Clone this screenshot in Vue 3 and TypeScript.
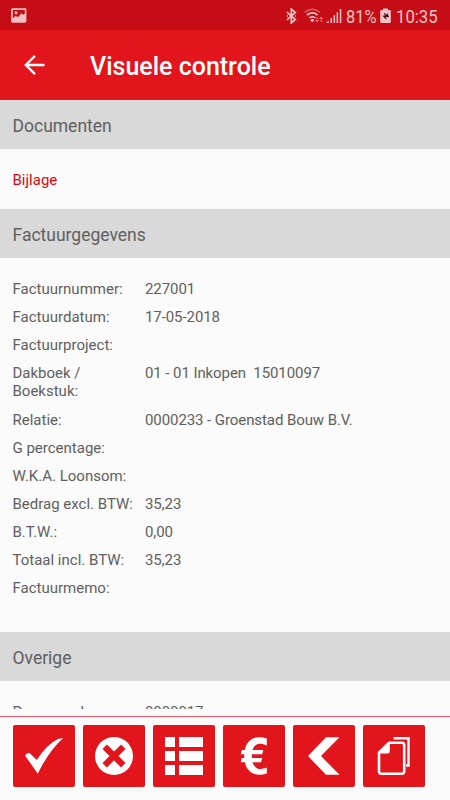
<script setup lang="ts">
interface Field {
  label: string
  value: string
}

const fields: Field[] = [
  { label: 'Factuurnummer:', value: '227001' },
  { label: 'Factuurdatum:', value: '17-05-2018' },
  { label: 'Factuurproject:', value: '' },
  { label: 'Dakboek / Boekstuk:', value: '01 - 01 Inkopen  15010097' },
  { label: 'Relatie:', value: '0000233 - Groenstad Bouw B.V.' },
  { label: 'G percentage:', value: '' },
  { label: 'W.K.A. Loonsom:', value: '' },
  { label: 'Bedrag excl. BTW:', value: '35,23' },
  { label: 'B.T.W.:', value: '0,00' },
  { label: 'Totaal incl. BTW:', value: '35,23' },
  { label: 'Factuurmemo:', value: '' },
]

const other: Field[] = [{ label: 'Procescode:', value: '0000017' }]
</script>

<template>
  <div class="screen">
    <div class="status">
      <svg class="picture" width="16" height="16" viewBox="0 0 16 16">
        <path fill="#f3bfc2" fill-rule="evenodd" d="M1.5 0.3h12.5a1.4 1.4 0 0 1 1.4 1.4v11.6a1.4 1.4 0 0 1-1.4 1.4H1.5a1.4 1.4 0 0 1-1.4-1.4V1.7A1.4 1.4 0 0 1 1.5.3zM1.8 2v8.2l3-2.4 2 1.5 3.8-4.1 1.7 1.6 1.5-1V2z" />
        <circle cx="5" cy="4.8" r="1.5" fill="#f3bfc2" />
      </svg>
      <div class="indicators">
        <svg class="bt" width="11" height="16" viewBox="0 0 11 16">
          <path d="M1 4.2l8.3 7.3L5.3 15V1l4 3.5L1 11.8M.8 8h1.1M8.8 8h1.1" fill="none" stroke="#f3c3c5" stroke-width="1.7" />
        </svg>
        <svg class="wifi" width="20" height="16" viewBox="0 0 20 16">
          <g fill="none" stroke="#f3c3c5" stroke-width="1.6">
            <path d="M.7 4.5Q8.3-2 16 4.5" opacity=".45" />
            <path d="M3 7.2q5.3-4.5 10.6 0M5.4 10q2.9-2.5 5.8 0" />
          </g>
          <circle cx="8.3" cy="12.3" r="1.6" fill="#f3c3c5" />
          <path d="M13 9v5M11.4 12.2L13 14l1.6-1.8M17.2 14V9M15.6 10.8L17.2 9l1.6 1.8" fill="none" stroke="#e57b80" stroke-width="1" />
        </svg>
        <svg class="signal" width="16" height="16" viewBox="0 0 16 16">
          <path d="M0 15l2.7-2.5V15zM4.5 10h1.5v5H4.5zM7.6 7.3h1.5V15H7.6zM10.6 4.2h1.5V15h-1.5zM13.8 1h1.5v14h-1.5z" fill="#f3c3c5" />
        </svg>
        <span class="percent">81%</span>
        <svg class="battery" width="11" height="16" viewBox="0 0 11 16">
          <path d="M3 .5h5V2h1.8a1 1 0 0 1 1 1v11a1 1 0 0 1-1 1H1.2a1 1 0 0 1-1-1V3a1 1 0 0 1 1-1H3z" fill="#f3c3c5" />
          <path d="M4 4.3L6 7.1l1.3-2L9 9.2 5.8 8.9 6.6 12 2.3 7.6l2.3.3z" fill="#3b090b" />
        </svg>
        <span class="clock">10:35</span>
      </div>
    </div>
    <header class="appbar">
      <svg class="back" width="22" height="20" viewBox="0 0 22 20">
        <path d="M20.6 10H2M11 .9L1.8 10l9.2 9.1" fill="none" stroke="#fff" stroke-width="2.3" />
      </svg>
      <h1>Visuele controle</h1>
    </header>
    <main class="content">
      <h2>Documenten</h2>
      <div class="attachment"><a>Bijlage</a></div>
      <h2>Factuurgegevens</h2>
      <dl class="invoice">
        <div v-for="f in fields" :key="f.label" class="row">
          <dt>{{ f.label }}</dt>
          <dd>{{ f.value }}</dd>
        </div>
      </dl>
      <h2>Overige</h2>
      <dl>
        <div v-for="f in other" :key="f.label" class="row">
          <dt>{{ f.label }}</dt>
          <dd>{{ f.value }}</dd>
        </div>
      </dl>
    </main>
    <nav class="toolbar">
      <button aria-label="Akkoord">
        <svg viewBox="0 0 62 62"><path fill="#fff" d="M12 30.5Q14 27.5 16.5 28L23.8 35Q34 19 45.5 13.7L50 13.2Q36 25.5 24.8 48.7Z" /></svg>
      </button>
      <button aria-label="Afkeuren">
        <svg viewBox="0 0 62 62">
          <circle cx="31" cy="31" r="19" fill="#fff" />
          <path d="M21.7 21.7l18.6 18.6M40.3 21.7L21.7 40.3" stroke="#e2151d" stroke-width="6.2" />
        </svg>
      </button>
      <button aria-label="Lijst">
        <svg viewBox="0 0 62 62"><path fill="#fff" d="M12 12h10v10H12zM26 12h24v10H26zM12 26h10v10H12zM26 26h24v10H26zM12 40h10v10H12zM26 40h24v10H26z" /></svg>
      </button>
      <button aria-label="Bedragen">
        <svg viewBox="0 0 62 62">
          <path d="M43.8 13.6V20.6C35 16 28.8 19.5 28.8 31S35 46.5 43.8 42.6V48.4C31 52.5 21.2 46.5 21.2 31S31 9 43.8 13.6z" fill="#fff" />
          <path d="M18.8 25h21.5l-1.2 4.3H17.7zM18.8 33h20.5L38 37.2H17.7z" fill="#fff" />
        </svg>
      </button>
      <button aria-label="Terug">
        <svg viewBox="0 0 62 62"><path fill="#fff" d="M33 12.3h13.5L28 31l18.5 18.8H33L15 31z" /></svg>
      </button>
      <button aria-label="Documenten">
        <svg viewBox="0 0 62 62">
          <path d="M26.5 17.7H39a2.2 2.2 0 0 1 2.2 2.2v26.6a2.2 2.2 0 0 1-2.2 2.2H18.2a2.2 2.2 0 0 1-2.2-2.2V27.5z" fill="none" stroke="#fff" stroke-width="2.6" />
          <path d="M26.8 17v9a2.5 2.5 0 0 1-2.5 2.5H16v-2.3L25 17z" fill="#fff" />
          <path d="M30.5 13.3h15V40.5H43" fill="none" stroke="#fff" stroke-width="2.4" />
        </svg>
      </button>
    </nav>
  </div>
</template>

<style>
body {
  margin: 0;
}
</style>

<style scoped>
.screen {
  width: 450px;
  height: 800px;
  display: flex;
  flex-direction: column;
  overflow: hidden;
  background: #fbfbfb;
  font-family: Roboto, sans-serif;
  color: #606060;
}
.status {
  flex: none;
  height: 30px;
  box-sizing: border-box;
  padding: 0 12px 0 11px;
  display: flex;
  align-items: center;
  justify-content: space-between;
  background: #c60d15;
  color: #f3c3c5;
}
.picture {
  margin-top: 1px;
}
.indicators {
  display: flex;
  align-items: center;
  font-size: 18px;
  line-height: 30px;
}
.indicators svg {
  margin-top: 1px;
}
.indicators span {
  display: block;
  padding-top: 2px;
  height: 28px;
  transform-origin: left center;
}
.indicators .bt {
  margin-right: 7px;
}
.indicators .signal {
  margin-left: 2px;
  margin-right: 4px;
}
.percent {
  width: 34px;
  transform: scaleX(0.91);
}
.clock {
  width: 42px;
  margin-left: 5px;
  transform: scaleX(0.93);
}
.appbar {
  flex: none;
  height: 70px;
  display: flex;
  align-items: center;
  box-sizing: border-box;
  padding: 4px 0 0 24px;
  background: #e2151d;
}
.back {
  margin-right: 44px;
  margin-bottom: 5px;
}
h1 {
  margin: 0;
  color: #fff;
  font-size: 25px;
  font-weight: 500;
  line-height: 34px;
}
.content {
  flex: none;
  height: 609px;
  overflow: hidden;
}
h2 {
  margin: 0;
  height: 49px;
  box-sizing: border-box;
  padding: 2px 12.5px 0;
  background: #d9d9d9;
  font-size: 17.5px;
  font-weight: 400;
  line-height: 48px;
}
.attachment {
  height: 60px;
  padding-left: 12.5px;
  font-size: 15px;
  line-height: 62px;
  color: #e00510;
}
dl {
  margin: 0;
  padding: 22px 12.5px 0;
  font-size: 15px;
  line-height: 18px;
}
.invoice {
  height: 352px;
}
.row {
  display: grid;
  grid-template-columns: 132.5px 1fr;
  padding-bottom: 10.15px;
}
dt {
  padding-right: 10px;
}
dd {
  margin: 0;
  white-space: pre;
  letter-spacing: -0.08px;
}
.toolbar {
  flex: none;
  height: 84px;
  margin-top: 7px;
  box-sizing: border-box;
  border-top: 1px solid #f05a60;
  padding: 8px 13px;
  display: flex;
  gap: 8px;
}
button {
  width: 62px;
  height: 62px;
  padding: 0;
  border: 0;
  border-radius: 2px;
  background: #e2151d;
}
button svg {
  display: block;
  width: 62px;
  height: 62px;
}
</style>
